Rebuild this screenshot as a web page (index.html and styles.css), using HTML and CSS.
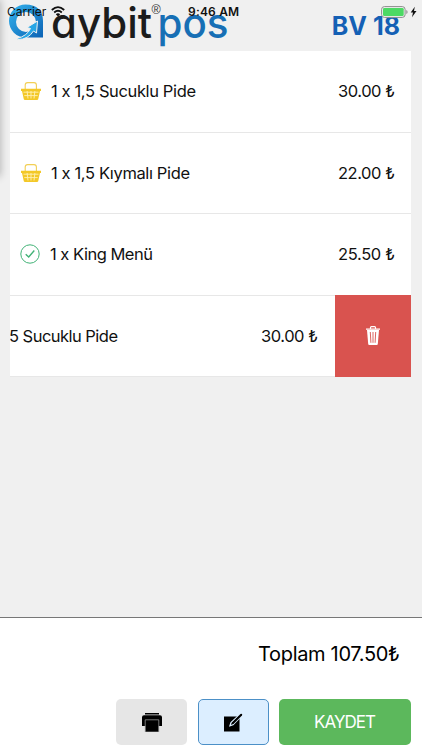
FILE: index.html
```html
<!DOCTYPE html>
<html lang="tr">
<head>
<meta charset="utf-8">
<title>Aybit POS</title>
<link rel="stylesheet" href="styles.css">
</head>
<body>
<svg class="defs" width="0" height="0" aria-hidden="true">
  <symbol id="basket" viewBox="0 0 20 18">
    <path d="M4.2 8V3Q4.2.6 6.6.6H13Q15.4.6 15.4 3V8" fill="none" stroke="#f2cf55" stroke-width="1.1"/>
    <path d="M0 6.8H20V9H19L17.2 17.2Q17 18 16 18H4Q3 18 2.8 17.2L1 9H0Z" fill="#f3c828"/>
    <path d="M2.5 10.2H17.5M3.3 13.6H16.7M6.1 9L7 16.5M10 9V16.5M13.9 9L13 16.5" fill="none" stroke="#fff0b5" stroke-width=".9"/>
  </symbol>
</svg>
<div class="screen">
  <header class="header">
    <svg class="logo" width="240" height="51" viewBox="0 0 240 51">
      <defs><linearGradient id="g" x1="0" y1="0" x2="1" y2="1"><stop offset="0" stop-color="#35b4ee"/><stop offset="1" stop-color="#0b62b4"/></linearGradient></defs>
      <path d="M25.500 4.500Q43 5 43 21V37.500H25.500A16.500 16.500 0 0 1 25.500 4.500ZM26 12A10 10 0 0 0 26 32A10 10 0 0 0 26 12Z" fill="url(#g)" fill-rule="evenodd"/>
      <path d="M17 38.500Q27 36 30.500 28.500L27 27.500L37.500 21L36.500 33L33.500 31Q28 39.500 18 39.500Z" fill="#25a5e5" stroke="#f0f0f0" stroke-width="1"/>
      <text class="word dark" x="51" y="38" textLength="101" lengthAdjust="spacingAndGlyphs">aybit</text>
      <text class="word blue" x="157.500" y="38" textLength="71" lengthAdjust="spacingAndGlyphs">pos</text>
      <text class="reg" x="151.500" y="14">®</text>
    </svg>
    <h1 class="table-name">BV 18</h1>
    <div class="status">
      <span class="carrier">Carrier</span>
      <svg class="wifi" width="14" height="11" viewBox="0 0 14 11"><path d="M.8 4Q7-1.800 13.200 4M3.200 6.500Q7 3 10.800 6.500" fill="none" stroke="#111" stroke-width="1.800"/><path d="M4.800 8.200Q7 6.200 9.200 8.200L7 10.500Z" fill="#111"/></svg>
      <span class="clock">9:46 AM</span>
      <svg class="battery" width="38" height="12" viewBox="0 0 38 12"><rect x=".6" y=".6" width="23.500" height="10.800" rx="2.800" fill="#f0f0f0" stroke="#8b8b8b"/><rect x="2" y="2" width="20.700" height="8" rx="1.300" fill="#4cd964"/><path d="M25.300 4V8Q26.600 7.500 26.600 6T25.300 4Z" fill="#8b8b8b"/><path d="M33.800.8L29.700 6.500H32L31 11.200L35.500 5H33Z" fill="#111"/></svg>
    </div>
  </header>
  <main class="list">
    <div class="row"><svg class="basket"><use href="#basket"/></svg><svg class="line" width="350" height="24"><text x="0" y="18" textLength="145">1 x 1,5 Sucuklu Pide</text><text x="287" y="18" textLength="57">30.00 ₺</text></svg></div>
    <div class="row"><svg class="basket"><use href="#basket"/></svg><svg class="line" width="350" height="24"><text x="0" y="18" textLength="139">1 x 1,5 Kıymalı Pide</text><text x="287" y="18" textLength="57">22.00 ₺</text></svg></div>
    <div class="row"><svg class="check" viewBox="0 0 20 20"><circle cx="10" cy="10" r="9.200"/><path d="M5.700 10.300L8.700 13L14.300 6.500"/></svg><svg class="line" width="350" height="24"><text x="0" y="18" textLength="103">1 x King Menü</text><text x="288" y="18" textLength="57">25.50 ₺</text></svg></div>
    <div class="row swiped">
      <svg class="line" width="325" height="24"><text x="-1" y="18" textLength="109">5 Sucuklu Pide</text><text x="251" y="18" textLength="57">30.00 ₺</text></svg>
      <button class="delete" aria-label="Sil"><svg width="14" height="19" viewBox="0 0 14 19"><path d="M4.500 3V1.600Q4.500.7 5.400.7H8.600Q9.500.7 9.500 1.600V3M0 3.200H14" fill="none" stroke="#fff" stroke-width="1.200"/><path d="M1 4H13L11.800 18Q11.700 19 10.700 19H3.300Q2.300 19 2.200 18Z" fill="#fff"/><path d="M4.300 6L4.900 16.800M7 6V16.800M9.700 6L9.100 16.800" stroke="#d9534f" stroke-width=".9"/></svg></button>
    </div>
  </main>
  <footer class="footer">
    <div class="total"><svg width="146" height="30"><text x="1" y="22" textLength="142">Toplam 107.50₺</text></svg></div>
    <div class="actions">
      <button class="btn print" aria-label="Yazdır"><svg width="20" height="19" viewBox="0 0 20 19"><path d="M3 0H17V1.400H3ZM2 2.200H18Q20 2.200 20 4.200V13H0V4.200Q0 2.200 2 2.200Z"/><path d="M3.200 6.800H16.800V19H3.200Z" fill="#000" stroke="#aaa" stroke-width=".7"/></svg></button>
      <button class="btn edit" aria-label="Düzenle"><svg width="20" height="19" viewBox="0 0 20 19"><path d="M1 3.500H16.500V18.500H1Z"/><path d="M7 12.800L8 9.500L16.300 1.800L18 3.500L10 11.800Z" stroke="#dceeff" stroke-width="1.300"/><path d="M10 10L18.200 1.800" stroke="#000" stroke-width="2" stroke-linecap="round"/></svg></button>
      <button class="btn save"><svg width="66" height="22"><text x="2" y="17" textLength="62">KAYDET</text></svg></button>
    </div>
  </footer>
</div>
</body>
</html>
```
FILE: styles.css
```css
* { box-sizing: border-box; }
body { margin: 0; font-family: Inter, "Liberation Sans", sans-serif; font-feature-settings: "calt" 0; color: #111; }
svg { display: block; flex: none; }
button { border: 0; padding: 0; font: inherit; }
.defs { position: absolute; }
.screen { position: relative; width: 422px; height: 750px; display: flex; flex-direction: column; background: #f0f0f0; overflow: hidden; }
.screen::before { content: ""; position: absolute; left: -8px; top: 0; width: 8px; height: 176px; box-shadow: 0 0 8px rgba(0,0,0,.3); }
.header { position: relative; height: 51px; display: flex; justify-content: space-between; }
.logo { overflow: visible; }
.word { font-size: 42px; font-weight: 500; font-feature-settings: "cv11"; }
.dark { fill: #1c1c1c; }
.blue { fill: #176fb5; }
.reg { font-family: "Liberation Sans", sans-serif; font-size: 12.500px; fill: #333; }
.table-name { margin: 11px 22px 0 0; font-size: 25px; line-height: 30px; font-weight: 700; color: #1460b5; letter-spacing: 0; }
.status { position: absolute; inset: 5px 0 auto 7px; height: 13px; display: flex; align-items: center; font-size: 12px; line-height: 13px; }
.carrier { width: 44px; }
.clock { margin-left: 123px; width: 53px; font-weight: 600; letter-spacing: .2px; white-space: nowrap; }
.battery { margin-left: 140px; }
.list { width: 401px; height: 326px; margin-left: 10px; display: flex; flex-direction: column; }
.row { height: 81.500px; flex: none; display: flex; align-items: center; padding-left: 11px; background: #fff; border-bottom: 1px solid #e7e7e7; }
.line { font-size: 16.500px; fill: #111; }
.basket { width: 20px; height: 18px; margin-right: 10px; }
.check { width: 20px; height: 20px; margin: 0 10px 0 -1px; fill: none; stroke: #41b276; stroke-width: 1; }
.check path { stroke-width: 1.400; }
.swiped { padding-left: 0; }
.delete { width: 76px; height: 82px; flex: none; background: #d9534f; display: flex; align-items: center; justify-content: center; }
.footer { margin-top: auto; height: 133px; background: #fff; border-top: 1px solid #777; padding: 21px 11px 0 0; }
.total { display: flex; justify-content: flex-end; font-size: 20px; padding-right: 8px; }
.actions { display: flex; justify-content: flex-end; gap: 10.500px; margin-top: 30px; }
.btn { height: 46px; width: 71px; border-radius: 5px; display: flex; align-items: center; justify-content: center; }
.print { background: #e6e6e6; }
.edit { background: #dceeff; border: 1px solid #4c90c7; }
.save { width: 132px; background: #5cb85c; font-size: 17px; fill: #fff; }
```
